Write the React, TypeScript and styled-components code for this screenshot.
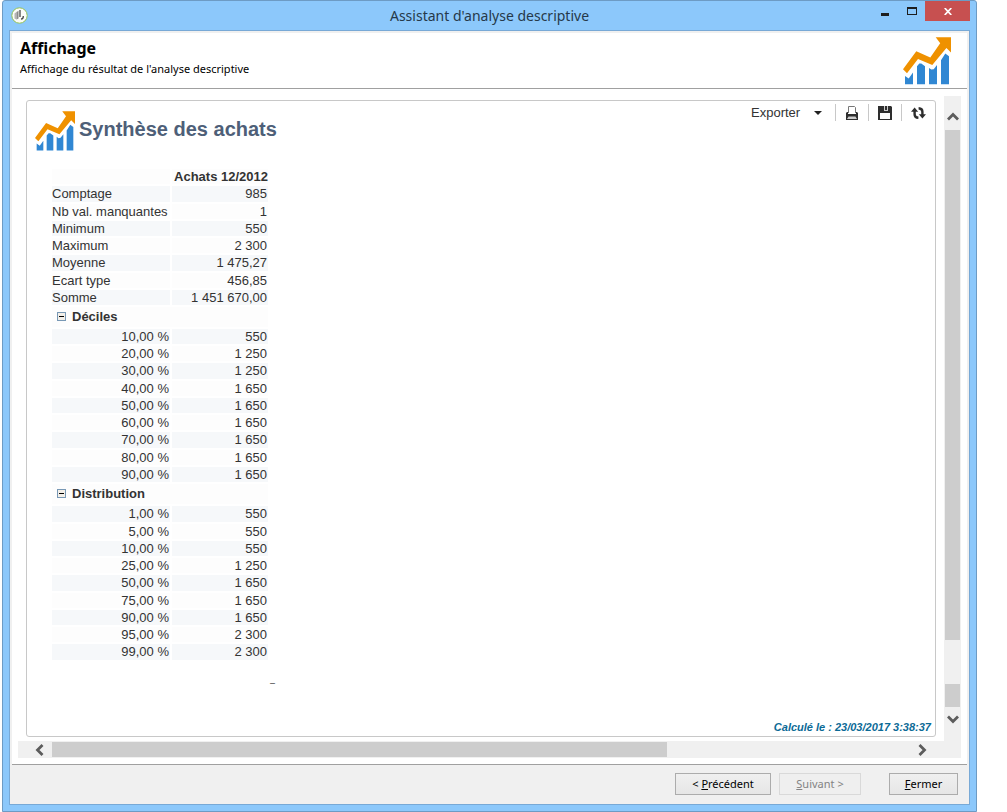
import React from "react";
import styled, { createGlobalStyle } from "styled-components";

const GlobalStyle = createGlobalStyle`
  *, *::before, *::after { box-sizing: border-box; }
  body { margin: 0; background: #fff; font-family: "Noto Sans", "Open Sans", sans-serif; font-size: 11px; color: #000; }
  h1, h2, p { margin: 0; }
  button { font: inherit; }
`;

const WindowFrame = styled.div`
  display: flex;
  flex-direction: column;
  min-height: 100vh;
  margin: 0 30px 0 2px;
  padding: 0 6px 6px;
  background: #8cc8fb;
  border: 1px solid #6d9bc4;
  border-radius: 3px 3px 0 0;
`;

const TitleBar = styled.header`
  display: grid;
  grid-template-columns: 1fr auto 1fr;
  height: 29px;
`;

const AppMark = styled.div`
  padding: 6px 0 0 2px;
  svg { display: block; }
`;

const WindowTitle = styled.h1`
  font-size: 14px;
  font-weight: 400;
  line-height: 30px;
  color: #26394a;
`;

const WindowControls = styled.div`
  display: flex;
  justify-content: flex-end;
  align-items: flex-start;
`;

const ControlButton = styled.button<{ $close?: boolean }>`
  display: flex;
  align-items: center;
  justify-content: center;
  width: ${(p) => (p.$close ? 45 : 27)}px;
  height: 20px;
  padding: 0;
  border: 0;
  background: ${(p) => (p.$close ? "#c75050" : "transparent")};
`;

const Body = styled.div`
  flex: 1;
  display: flex;
  flex-direction: column;
  padding: 2px;
  background: #f0f0f0;
  border: 1px solid #78a9d6;
`;

const StepHeader = styled.div`
  display: flex;
  justify-content: space-between;
  height: 56px;
  padding: 4px 16px 4px 8px;
  background: #fff;
  border-bottom: 1px solid #a0a0a0;
`;

const StepTitle = styled.h2`
  font-size: 16px;
  font-weight: 700;
  line-height: 22px;
`;

const StepText = styled.p`
  line-height: 20px;
`;

const Viewport = styled.main`
  flex: 1;
  display: grid;
  grid-template-columns: 1fr 17px;
  grid-template-rows: 1fr 17px;
  padding: 7px 6px 6px;
  background: #fff;
  border-bottom: 1px solid #a0a0a0;
`;

const Report = styled.section`
  display: flex;
  flex-direction: column;
  margin: 4px 8px;
  padding: 0 1px 3px 8px;
  border: 1px solid #c8c8c8;
  border-radius: 3px;
  font-family: "Liberation Sans", Arial, sans-serif;
  font-size: 13px;
  color: #333;
`;

const ReportHead = styled.div`
  display: flex;
  justify-content: space-between;
  align-items: flex-start;
  height: 66px;
`;

const ReportTitle = styled.div`
  display: flex;
  gap: 4px;
  padding-top: 10px;
  h2 { font-size: 20px; line-height: 36px; color: #4e5f78; }
`;

const Toolbar = styled.div`
  display: flex;
  align-items: center;
  padding-top: 3px;
`;

const ToolButton = styled.button<{ $menu?: boolean }>`
  display: flex;
  align-items: center;
  justify-content: ${(p) => (p.$menu ? "flex-start" : "center")};
  gap: 14px;
  width: ${(p) => (p.$menu ? "84px" : "33px")};
  height: 17px;
  padding: 0;
  border: 0;
  background: none;
  color: #333;
  & + & { border-left: 1px solid #c8c8c8; }
`;

const DataTable = styled.table`
  align-self: flex-start;
  width: 220px;
  margin-left: 15px;
  border-collapse: separate;
  border-spacing: 2px;
  table-layout: fixed;
`;

const LabelCol = styled.col`
  width: 118px;
`;

const Row = styled.tr<{ $tall?: boolean; $shaded?: boolean }>`
  height: ${(p) => (p.$tall ? 16 : 15)}px;
  th, td {
    padding: 0;
    line-height: 15px;
    white-space: nowrap;
    text-align: right;
    vertical-align: top;
    background: ${(p) => (p.$shaded ? "#f6f8fa" : "#fdfdfd")};
  }
`;

const LabelCell = styled.th<{ $start?: boolean }>`
  && { font-weight: 400; text-align: ${(p) => (p.$start ? "left" : "right")}; padding-right: ${(p) => (p.$start ? 0 : 1)}px; }
`;

const ValueCell = styled.td`
  && { padding-right: 1px; }
`;

const GroupCell = styled.th`
  height: 20px;
  && { text-align: left; padding: 2px 0 0 5px; }
`;

const GroupToggle = styled.button`
  display: flex;
  align-items: center;
  gap: 6px;
  padding: 0;
  border: 0;
  background: none;
  font-weight: 700;
  line-height: 15px;
  color: #333;
`;

const Dash = styled.p`
  margin: 13px 0 0 235px;
  font-size: 9px;
  line-height: 16px;
`;

const Computed = styled.p`
  margin-top: auto;
  padding-right: 3px;
  text-align: right;
  font-size: 11px;
  font-style: italic;
  font-weight: 700;
  line-height: 12px;
  color: #0b6a96;
`;

const ScrollTrack = styled.div<{ $vertical?: boolean }>`
  display: flex;
  flex-direction: ${(p) => (p.$vertical ? "column" : "row")};
  grid-column: ${(p) => (p.$vertical ? "auto" : "1 / -1")};
  padding: ${(p) => (p.$vertical ? "0 1px" : "1px 0")};
  background: #f0f0f0;
`;

const Thumb = styled.div<{ $share: number; $empty?: boolean }>`
  flex: ${(p) => p.$share} 1 0;
  background: ${(p) => (p.$empty ? "transparent" : "#cdcdcd")};
`;

const ScrollButton = styled.button<{ $inset: string; $size?: number }>`
  display: flex;
  align-items: center;
  justify-content: center;
  flex: 0 0 ${(p) => p.$size ?? 34}px;
  padding: ${(p) => p.$inset};
  border: 0;
  background: none;
`;

const Actions = styled.footer`
  display: flex;
  justify-content: flex-end;
  height: 36px;
  margin-top: 1px;
  padding: 7px 9px 0;
`;

const ActionButton = styled.button<{ $width: number; $before?: number }>`
  width: ${(p) => p.$width}px;
  height: 22px;
  margin-left: ${(p) => p.$before ?? 0}px;
  padding: 0;
  border: 1px solid #acacac;
  background: linear-gradient(#f0f0f0, #e6e6e6);
  line-height: 20px;
  color: #000;
  &:disabled { border-color: #d9d9d9; background: #efefef; color: #838383; }
`;

const ChartLogo = ({ size }: { size: number }) => (
  <svg width={size} height={size} viewBox="0 0 48 47.5" aria-hidden="true">
    <path fill="#ef9100" d="M0 32 13.3 14l14 6.3L37.2 6 32.7 0H48v15.3l-4.6-4.6L29.3 27.7 15 21.7 4 36z" />
    <path
      fill="#3087d3"
      d="M2 38.7l3.7 2.6L10 35.3V47H2zM14 29l2.3-2.7h2L22 29v18h-8zM26 30.7l2.3 1.6 2.4-.4 3.3-4.2V47h-8zM38 23l4.3-6.7L46 19v28h-8z"
    />
  </svg>
);

const AppIcon = () => (
  <svg width="17" height="17" viewBox="0 0 17 17" aria-hidden="true">
    <circle cx="8.5" cy="8.5" r="7.7" fill="#fbfcf8" stroke="#93c255" />
    <path d="M3.5 6.5l2-1.5v7.5l-2-1z" fill="#b5b5b5" />
    <path d="M5.5 5l2-1.2v7.7l-2 1z" fill="#8c8c8c" />
    <path d="M9 3v7M10 12.2q2.5-.4 2.3-3.2" fill="none" stroke="#4a4a4a" strokeWidth="1.3" />
  </svg>
);

const PrintIcon = () => (
  <svg width="12" height="14" viewBox="0 0 12 14" aria-hidden="true">
    <path d="M2.5 7V.5h6l1 1V7" fill="#fff" stroke="#777" />
    <path d="M0 7l1-1h1v2h8V6h1l1 1v7H0z" fill="#2e2e2e" />
    <path d="M2.5 10.5h7L11 13H1z" fill="#ccc" />
  </svg>
);

const SaveIcon = () => (
  <svg width="14" height="14" viewBox="0 0 14 14" aria-hidden="true">
    <path d="M0 0h13l1 1v13H0z" fill="#2e2e2e" />
    <path d="M4 0h6v5H4z" fill="#ccc" />
    <path d="M4 0h2v5H4zM7 0h2v4H7z" fill="#2e2e2e" />
    <path d="M2 7h10v6H2z" fill="#fff" />
  </svg>
);

const RefreshIcon = () => (
  <svg width="15" height="12" viewBox="0 0 15 12" aria-hidden="true">
    <path d="M3.6 4v3.2q0 3.4 3.8 3.6M11.4 8V4.8q0-3.4-3.8-3.6" fill="none" stroke="#2e2e2e" strokeWidth="2.4" />
    <path d="M0 4.8L3.6.6l3.6 4.2zM7.8 7.2H15l-3.6 4.2z" fill="#2e2e2e" />
  </svg>
);

const rotations = { up: 0, right: 90, down: 180, left: 270 };
const Chevron = ({ to }: { to: keyof typeof rotations }) => (
  <svg width="12" height="12" viewBox="0 0 12 12" aria-hidden="true">
    <path d="M1 8.5l5-5 5 5" transform={`rotate(${rotations[to]} 6 6)`} fill="none" stroke="#5c5c5c" strokeWidth="2.8" />
  </svg>
);

const CollapseIcon = () => (
  <svg width="9" height="9" viewBox="0 0 9 9" aria-hidden="true">
    <rect x=".5" y=".5" width="8" height="8" fill="#f3efe8" stroke="#7898b5" />
    <path d="M2 4.5h5" stroke="#000" />
  </svg>
);

type Entry = [string, string];
const summary: Entry[] = [
  ["Comptage", "985"],
  ["Nb val. manquantes", "1"],
  ["Minimum", "550"],
  ["Maximum", "2 300"],
  ["Moyenne", "1 475,27"],
  ["Ecart type", "456,85"],
  ["Somme", "1 451 670,00"],
];
const deciles: Entry[] = [
  ["10,00 %", "550"],
  ["20,00 %", "1 250"],
  ["30,00 %", "1 250"],
  ["40,00 %", "1 650"],
  ["50,00 %", "1 650"],
  ["60,00 %", "1 650"],
  ["70,00 %", "1 650"],
  ["80,00 %", "1 650"],
  ["90,00 %", "1 650"],
];
const distribution: Entry[] = [
  ["1,00 %", "550"],
  ["5,00 %", "550"],
  ["10,00 %", "550"],
  ["25,00 %", "1 250"],
  ["50,00 %", "1 650"],
  ["75,00 %", "1 650"],
  ["90,00 %", "1 650"],
  ["95,00 %", "2 300"],
  ["99,00 %", "2 300"],
];

const Group = ({ title, entries, offset }: { title?: string; entries: Entry[]; offset: number }) => (
  <tbody>
    {title && (
      <Row>
        <GroupCell colSpan={2} scope="rowgroup">
          <GroupToggle type="button" aria-expanded="true">
            <CollapseIcon />
            {title}
          </GroupToggle>
        </GroupCell>
      </Row>
    )}
    {entries.map(([label, value], i) => (
      <Row key={label} $shaded={i % 2 === 0} $tall={(i + offset) % 4 === 0}>
        <LabelCell scope="row" $start={!title}>{label}</LabelCell>
        <ValueCell>{value}</ValueCell>
      </Row>
    ))}
  </tbody>
);

export default function App() {
  return (
    <>
      <GlobalStyle />
      <WindowFrame>
        <TitleBar>
          <AppMark><AppIcon /></AppMark>
          <WindowTitle>Assistant d'analyse descriptive</WindowTitle>
          <WindowControls>
            <ControlButton type="button" aria-label="Réduire">
              <svg width="8" height="9"><path d="M0 6h8v3H0z" fill="#1e1e1e" /></svg>
            </ControlButton>
            <ControlButton type="button" aria-label="Agrandir">
              <svg width="10" height="8"><path d="M0 0h10v8H0zM1 2v5h8V2z" fillRule="evenodd" fill="#1e1e1e" /></svg>
            </ControlButton>
            <ControlButton type="button" aria-label="Fermer la fenêtre" $close>
              <svg width="8" height="7"><path d="M.7 0l6.6 7M7.3 0L.7 7" stroke="#fff" strokeWidth="1.7" /></svg>
            </ControlButton>
          </WindowControls>
        </TitleBar>
        <Body>
          <StepHeader>
            <div>
              <StepTitle>Affichage</StepTitle>
              <StepText>Affichage du résultat de l'analyse descriptive</StepText>
            </div>
            <ChartLogo size={48} />
          </StepHeader>
          <Viewport>
            <Report>
              <ReportHead>
                <ReportTitle>
                  <ChartLogo size={40} />
                  <h2>Synthèse des achats</h2>
                </ReportTitle>
                <Toolbar>
                  <ToolButton type="button" $menu aria-haspopup="menu">
                    Exporter
                    <svg width="8" height="4" aria-hidden="true"><path d="M0 0h8L4 4z" fill="#222" /></svg>
                  </ToolButton>
                  <ToolButton type="button" aria-label="Imprimer"><PrintIcon /></ToolButton>
                  <ToolButton type="button" aria-label="Enregistrer"><SaveIcon /></ToolButton>
                  <ToolButton type="button" aria-label="Actualiser"><RefreshIcon /></ToolButton>
                </Toolbar>
              </ReportHead>
              <DataTable>
                <colgroup>
                  <LabelCol />
                  <col />
                </colgroup>
                <thead>
                  <Row>
                    <td />
                    <th scope="col">Achats 12/2012</th>
                  </Row>
                </thead>
                <Group entries={summary} offset={0} />
                <Group title="Déciles" entries={deciles} offset={6} />
                <Group title="Distribution" entries={distribution} offset={16} />
              </DataTable>
              <Dash>–</Dash>
              <Computed>Calculé le : 23/03/2017 3:38:37</Computed>
            </Report>
            <ScrollTrack $vertical>
              <ScrollButton type="button" aria-label="Défiler vers le haut" $inset="8px 0 0"><Chevron to="up" /></ScrollButton>
              <Thumb $share={510} />
              <Thumb $share={44} $empty />
              <Thumb $share={23} />
              <ScrollButton type="button" aria-label="Défiler vers le bas" $inset="0 0 10px"><Chevron to="down" /></ScrollButton>
            </ScrollTrack>
            <ScrollTrack>
              <ScrollButton type="button" aria-label="Défiler vers la gauche" $inset="0 0 0 9px"><Chevron to="left" /></ScrollButton>
              <Thumb $share={615} />
              <Thumb $share={243} $empty />
              <ScrollButton type="button" aria-label="Défiler vers la droite" $size={51} $inset="0 27px 0 0"><Chevron to="right" /></ScrollButton>
            </ScrollTrack>
          </Viewport>
          <Actions>
            <ActionButton type="button" $width={96}>&lt; <u>P</u>récédent</ActionButton>
            <ActionButton type="button" $width={82} $before={8} disabled><u>S</u>uivant &gt;</ActionButton>
            <ActionButton type="button" $width={69} $before={28}><u>F</u>ermer</ActionButton>
          </Actions>
        </Body>
      </WindowFrame>
    </>
  );
}
